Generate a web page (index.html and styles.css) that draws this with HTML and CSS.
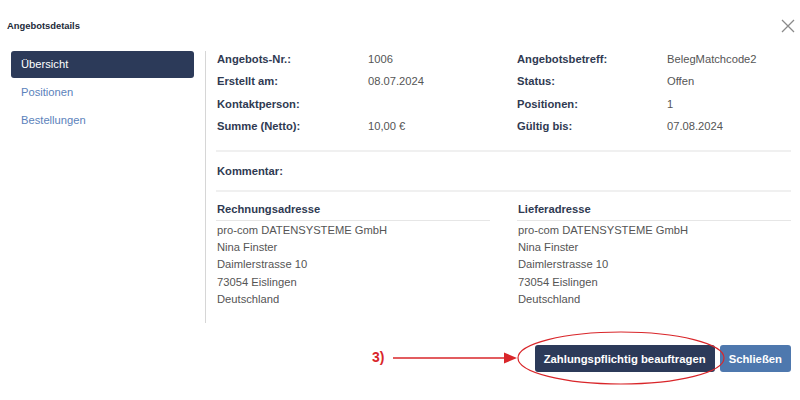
FILE: index.html
```html
<!DOCTYPE html>
<html lang="de">
<head>
<meta charset="utf-8">
<title>Angebotsdetails</title>
<link rel="stylesheet" href="styles.css">
</head>
<body>
<div class="modal">
  <div class="header">
    <div class="title">Angebotsdetails</div>
    <svg class="close" width="14" height="14" viewBox="0 0 14 14"><path d="M1 1L13 13M13 1L1 13" stroke="#8a8a8a" stroke-width="1.3" fill="none"/></svg>
  </div>
  <div class="body">
    <nav class="sidebar">
      <div class="nav-item active">Übersicht</div>
      <div class="nav-item">Positionen</div>
      <div class="nav-item">Bestellungen</div>
    </nav>
    <div class="content">
      <div class="facts">
        <div class="label">Angebots-Nr.:</div><div class="value">1006</div>
        <div class="label">Angebotsbetreff:</div><div class="value">BelegMatchcode2</div>
        <div class="label">Erstellt am:</div><div class="value">08.07.2024</div>
        <div class="label">Status:</div><div class="value">Offen</div>
        <div class="label">Kontaktperson:</div><div class="value"></div>
        <div class="label">Positionen:</div><div class="value">1</div>
        <div class="label">Summe (Netto):</div><div class="value">10,00 €</div>
        <div class="label">Gültig bis:</div><div class="value">07.08.2024</div>
      </div>
      <div class="comment"><span class="label">Kommentar:</span></div>
      <div class="addresses">
        <div class="address">
          <div class="addr-head">Rechnungsadresse</div>
          <div class="addr-line">pro-com DATENSYSTEME GmbH</div>
          <div class="addr-line">Nina Finster</div>
          <div class="addr-line">Daimlerstrasse 10</div>
          <div class="addr-line">73054 Eislingen</div>
          <div class="addr-line">Deutschland</div>
        </div>
        <div class="address">
          <div class="addr-head">Lieferadresse</div>
          <div class="addr-line">pro-com DATENSYSTEME GmbH</div>
          <div class="addr-line">Nina Finster</div>
          <div class="addr-line">Daimlerstrasse 10</div>
          <div class="addr-line">73054 Eislingen</div>
          <div class="addr-line">Deutschland</div>
        </div>
      </div>
    </div>
  </div>
  <div class="footer">
    <button class="btn btn-primary">Zahlungspflichtig beauftragen</button>
    <button class="btn btn-secondary">Schließen</button>
  </div>
  <div class="annotation">
    <span class="anno-label">3)</span>
    <svg class="anno-svg" width="800" height="400" viewBox="0 0 800 400">
      <line x1="393" y1="358" x2="506" y2="358" stroke="#d9262a" stroke-width="1.6"/>
      <polygon points="504,352.5 517,358 504,363.5" fill="#d9262a"/>
      <ellipse cx="621" cy="358" rx="103" ry="26" fill="none" stroke="#d9262a" stroke-width="1.2"/>
    </svg>
  </div>
</div>
</body>
</html>
```

FILE: styles.css
```css
* { box-sizing: border-box; }
html, body {
  margin: 0;
  padding: 0;
  background: #ffffff;
}
body {
  font-family: "Liberation Sans", Arial, sans-serif;
  font-size: 11.2px;
  color: #555;
  width: 800px;
  height: 400px;
  overflow: hidden;
}
.modal {
  position: relative;
  width: 800px;
  height: 400px;
}
.header {
  height: 51px;
  display: flex;
  justify-content: space-between;
  align-items: flex-start;
  padding: 19px 5px 0 7px;
}
.title {
  font-size: 9.4px;
  font-weight: bold;
  color: #222a3a;
  line-height: 14px;
}
.close {
  margin-top: 0;
}
.body {
  display: flex;
  height: 272px;
}
.sidebar {
  width: 205px;
  padding-left: 11px;
  padding-right: 11px;
}
.nav-item {
  height: 28px;
  line-height: 27px;
  padding-left: 10px;
  color: #5b82bb;
  border-radius: 3px;
}
.nav-item.active {
  background: #2c3a59;
  color: #ffffff;
  height: 27px;
  margin-bottom: 1px;
}
.content {
  flex: 1;
  border-left: 1px solid #d6d6d6;
  padding: 0 9px 0 10px;
}
.facts {
  display: grid;
  grid-template-columns: 151px 149px 150px 1fr;
  row-gap: 6.33px;
  line-height: 16px;
  padding-left: 1px;
  padding-bottom: 16px;
  border-bottom: 2px solid #f0f0f0;
}
.label {
  font-weight: bold;
  color: #2f3a52;
}
.value {
  color: #555;
}
.comment {
  line-height: 16px;
  padding: 11px 0 11px 1px;
  border-bottom: 2px solid #f0f0f0;
}
.addresses {
  display: grid;
  grid-template-columns: 274px 274px;
  column-gap: 27px;
  padding-top: 9px;
}
.addr-head {
  font-weight: bold;
  color: #2f3a52;
  line-height: 16px;
  padding-left: 1px;
  padding-bottom: 3px;
  border-bottom: 1px solid #e6e6e6;
  margin-bottom: 1px;
}
.addr-line {
  line-height: 17.25px;
  padding-left: 1px;
}
.footer {
  display: flex;
  justify-content: flex-end;
  gap: 5px;
  padding: 22px 9px 0 0;
}
.btn {
  font-family: "Liberation Sans", Arial, sans-serif;
  font-size: 11.3px;
  font-weight: bold;
  color: #ffffff;
  height: 27px;
  padding: 0 9px;
  border: none;
  border-radius: 3px;
}
.btn-primary { background: #2c3a59; }
.btn-secondary { background: #4e78ae; }
.annotation {
  position: absolute;
  left: 0;
  top: 0;
  width: 800px;
  height: 400px;
  pointer-events: none;
}
.anno-svg {
  position: absolute;
  left: 0;
  top: 0;
}
.anno-label {
  position: absolute;
  left: 372px;
  top: 349px;
  font-size: 14px;
  font-weight: bold;
  color: #d9262a;
  line-height: 17px;
}
```
